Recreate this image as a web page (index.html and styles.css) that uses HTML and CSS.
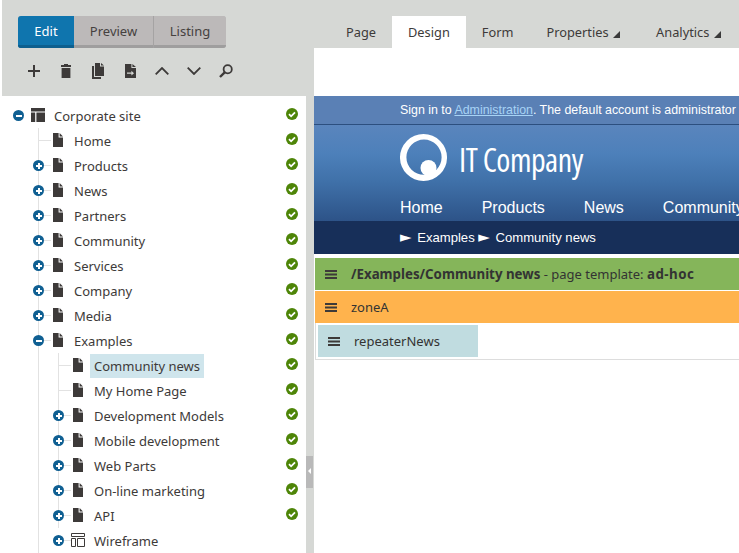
FILE: index.html
```html
<!DOCTYPE html>
<html lang="en">
<head>
<meta charset="utf-8">
<title>Pages</title>
<link rel="stylesheet" href="styles.css">
</head>
<body>
<svg class="defs" width="0" height="0" aria-hidden="true">
  <symbol id="page" viewBox="0 0 10 14"><path d="M0 0h5.6v4.4H10V14H0z"/><path d="M6.6 0L10 3.4H6.6z"/></symbol>
  <symbol id="layout" viewBox="0 0 14 14"><path d="M0 0h14v3.4H0zM0 4.6h4.2V14H0zM5.4 4.6H14V14H5.4z"/></symbol>
  <symbol id="wire" viewBox="0 0 14 14"><path fill="none" stroke="currentColor" d="M.5.5h13v3H.5zM.5 5.5h4v8h-4zM6.5 5.5h7v8h-7z"/></symbol>
  <symbol id="check" viewBox="0 0 12 12"><circle cx="6" cy="6" r="6" fill="#4e8508"/><path d="M3 6.2l2.1 2.1L9 4.3" fill="none" stroke="#fff" stroke-width="1.8"/></symbol>
  <symbol id="menu" viewBox="0 0 12 9"><path d="M0 0h12v2H0zM0 3.5h12v2H0zM0 7h12v2H0z"/></symbol>
</svg>
<div class="app">
  <aside class="sidebar">
    <div class="modes">
      <div class="mode-group">
        <span class="mode mode-active">Edit</span>
        <span class="mode mode-preview">Preview</span>
        <span class="mode mode-listing">Listing</span>
      </div>
    </div>
    <div class="toolbar">
      <span class="tool"><svg width="12" height="12" viewBox="0 0 12 12"><path d="M5 0h2v5h5v2H7v5H5V7H0V5h5z"/></svg></span>
      <span class="tool"><svg width="10" height="14" viewBox="0 0 10 14"><path d="M3 0h4v1h3v2H0V1h3zM.6 4h8.8v10H.6z"/></svg></span>
      <span class="tool"><svg width="12" height="16" viewBox="0 0 12 16"><path d="M3 0h5v3.4h4V13H3zM9 0l3 2.4H9zM0 3h2v11h7v2H0z"/></svg></span>
      <span class="tool"><svg width="11" height="14" viewBox="0 0 11 14"><path fill-rule="evenodd" d="M0 0h6.4v4H11v10H0zM7.4 0L11 3H7.4zM2 8.6v1.2h4.4V11.6L9 9.2 6.4 6.8v1.8z"/></svg></span>
      <span class="tool"><svg class="line" width="14" height="8" viewBox="0 0 14 8"><path d="M.7 7.3L7 1l6.3 6.3"/></svg></span>
      <span class="tool"><svg class="line" width="14" height="8" viewBox="0 0 14 8"><path d="M.7.7L7 7 13.3.7"/></svg></span>
      <span class="tool"><svg class="line" width="14" height="14" viewBox="0 0 14 14"><circle cx="8.7" cy="5.3" r="4.1"/><path class="thick" d="M5.7 8.3L1 13"/></svg></span>
    </div>
    <nav class="tree">
      <ul class="tree-root">
        <li>
          <div class="row row-root">
            <span class="slot"><span class="toggle toggle-open"></span></span>
            <svg class="ico ico-wide"><use href="#layout"/></svg>
            <span class="label">Corporate site</span>
            <svg class="status"><use href="#check"/></svg>
          </div>
          <ul class="branch">
            <li><div class="row"><span class="slot"></span><svg class="ico"><use href="#page"/></svg><span class="label">Home</span><svg class="status"><use href="#check"/></svg></div></li>
            <li><div class="row"><span class="slot"><span class="toggle"></span></span><svg class="ico"><use href="#page"/></svg><span class="label">Products</span><svg class="status"><use href="#check"/></svg></div></li>
            <li><div class="row"><span class="slot"><span class="toggle"></span></span><svg class="ico"><use href="#page"/></svg><span class="label">News</span><svg class="status"><use href="#check"/></svg></div></li>
            <li><div class="row"><span class="slot"><span class="toggle"></span></span><svg class="ico"><use href="#page"/></svg><span class="label">Partners</span><svg class="status"><use href="#check"/></svg></div></li>
            <li><div class="row"><span class="slot"><span class="toggle"></span></span><svg class="ico"><use href="#page"/></svg><span class="label">Community</span><svg class="status"><use href="#check"/></svg></div></li>
            <li><div class="row"><span class="slot"><span class="toggle"></span></span><svg class="ico"><use href="#page"/></svg><span class="label">Services</span><svg class="status"><use href="#check"/></svg></div></li>
            <li><div class="row"><span class="slot"><span class="toggle"></span></span><svg class="ico"><use href="#page"/></svg><span class="label">Company</span><svg class="status"><use href="#check"/></svg></div></li>
            <li><div class="row"><span class="slot"><span class="toggle"></span></span><svg class="ico"><use href="#page"/></svg><span class="label">Media</span><svg class="status"><use href="#check"/></svg></div></li>
            <li>
              <div class="row"><span class="slot"><span class="toggle toggle-open"></span></span><svg class="ico"><use href="#page"/></svg><span class="label">Examples</span><svg class="status"><use href="#check"/></svg></div>
              <ul class="branch branch-sub">
                <li><div class="row"><span class="slot"></span><svg class="ico"><use href="#page"/></svg><span class="label label-selected">Community news</span><svg class="status"><use href="#check"/></svg></div></li>
                <li><div class="row"><span class="slot"></span><svg class="ico"><use href="#page"/></svg><span class="label">My Home Page</span><svg class="status"><use href="#check"/></svg></div></li>
                <li><div class="row"><span class="slot"><span class="toggle"></span></span><svg class="ico"><use href="#page"/></svg><span class="label">Development Models</span><svg class="status"><use href="#check"/></svg></div></li>
                <li><div class="row"><span class="slot"><span class="toggle"></span></span><svg class="ico"><use href="#page"/></svg><span class="label">Mobile development</span><svg class="status"><use href="#check"/></svg></div></li>
                <li><div class="row"><span class="slot"><span class="toggle"></span></span><svg class="ico"><use href="#page"/></svg><span class="label">Web Parts</span><svg class="status"><use href="#check"/></svg></div></li>
                <li><div class="row"><span class="slot"><span class="toggle"></span></span><svg class="ico"><use href="#page"/></svg><span class="label">On-line marketing</span><svg class="status"><use href="#check"/></svg></div></li>
                <li><div class="row"><span class="slot"><span class="toggle"></span></span><svg class="ico"><use href="#page"/></svg><span class="label">API</span><svg class="status"><use href="#check"/></svg></div></li>
                <li><div class="row"><span class="slot"><span class="toggle"></span></span><svg class="ico ico-wire"><use href="#wire"/></svg><span class="label">Wireframe</span></div></li>
              </ul>
            </li>
          </ul>
        </li>
      </ul>
    </nav>
  </aside>
  <div class="splitter"><span class="splitter-handle"></span></div>
  <main class="main">
    <div class="tabs">
      <span class="tab">Page</span>
      <span class="tab tab-active">Design</span>
      <span class="tab tab-form">Form</span>
      <span class="tab tab-menu">Properties</span>
      <span class="tab tab-menu">Analytics</span>
    </div>
    <div class="tabs-gap"></div>
    <section class="site">
      <div class="signin"><span>Sign in to <a href="#">Administration</a>. The default account is administrator</span></div>
      <div class="masthead">
        <div class="logo">
          <svg class="logo-mark" width="47" height="47" viewBox="0 0 47 47"><path fill-rule="evenodd" d="M23.5 0a23.5 23.5 0 1 0 0 47a23.5 23.5 0 1 0 0-47zM24 5.6a17.6 17.6 0 1 1 0 35.2a17.6 17.6 0 1 1 0-35.2z"/><circle cx="28.5" cy="34" r="8"/></svg>
          <span class="logo-text">IT Company</span>
        </div>
        <div class="site-nav">
          <span>Home</span><span>Products</span><span>News</span><span>Community</span>
        </div>
      </div>
      <div class="crumbs"><span class="crumb-arrow">►</span> Examples <span class="crumb-arrow">►</span> Community news</div>
      <div class="design">
        <div class="bar bar-page"><svg class="handle"><use href="#menu"/></svg><span><b>/Examples/Community news</b> - page template: <b class="tpl">ad-hoc</b></span></div>
        <div class="zone">
          <div class="bar bar-zone"><svg class="handle"><use href="#menu"/></svg><span>zoneA</span></div>
          <div class="zone-body">
            <div class="bar bar-part"><svg class="handle"><use href="#menu"/></svg><span>repeaterNews</span></div>
          </div>
        </div>
      </div>
    </section>
  </main>
</div>
</body>
</html>
```
FILE: styles.css
```css
html, body { margin: 0; height: 100%; overflow: hidden; background: #fff; }
body { font-family: "Noto Sans", sans-serif; font-size: 13px; color: #3d3a39; }
ul { list-style: none; margin: 0; padding: 0; }
.defs { position: absolute; }
.app { display: flex; height: 553px; width: 739px; overflow: hidden; }

.sidebar { width: 304px; margin-left: 2px; flex: none; display: flex; flex-direction: column; background: #d6d8d5; }
.modes { padding: 16px 0 0 16px; height: 32px; }
.mode-group { display: inline-flex; height: 32px; box-sizing: border-box; border-radius: 3px; overflow: hidden; background: #bcb9b9; }
.mode { display: flex; align-items: center; justify-content: center; height: 32px; padding-bottom: 2px; background: #bcb9b9; color: #45413f; font-size: 13px; box-sizing: border-box; box-shadow: inset 0 -3px 0 #9f9e9e; }
.mode-active { width: 56px; background: #0f75ae; color: #fff; box-shadow: inset 0 -3px 0 #0d5f8e; }
.mode-preview { width: 80px; border-right: 1px solid #a5a3a3; }
.mode-listing { width: 72px; }

.toolbar { height: 46px; padding: 0 0 2px 16px; display: flex; align-items: center; }
.tool { width: 32px; display: flex; justify-content: center; align-items: center; }
.tool svg { fill: #3d3a39; }
.tool svg.line { fill: none; stroke: #3d3a39; stroke-width: 1.8; }
.tool svg .thick { stroke-width: 2.4; }

.tree { flex: 1; min-height: 0; background: #fff; overflow: hidden; padding: 7px 8px 0 0; }
.row { display: flex; align-items: center; height: 25px; }
.row-root { padding-left: 17px; }
.branch { margin-left: 36px; border-left: 1px solid #e2e2e2; }
.branch-sub { margin-left: 19px; border-left: 0; }
.branch-sub > li { border-left: 1px solid #e2e2e2; }
.branch-sub > li:last-child { border-left-color: transparent; }
.slot { position: relative; width: 12px; height: 1px; margin-right: 2px; background: #e2e2e2; flex: none; }
.row-root .slot { background: none; margin-right: 0; }
.toggle { position: absolute; left: -6px; top: -5px; width: 11px; height: 11px; border-radius: 50%; background: #0f5f92; }
.toggle::before { content: ""; position: absolute; left: 2.5px; top: 4.5px; width: 6px; height: 2px; background: #fff; }
.toggle::after { content: ""; position: absolute; left: 4.5px; top: 2.5px; width: 2px; height: 6px; background: #fff; }
.toggle-open::after { display: none; }
.ico { width: 10px; height: 14px; flex: none; fill: #3d3a39; color: #3d3a39; margin-top: -1px; }
.ico-wide { width: 14px; }
.ico-wire { width: 14px; margin: -1px -2px 0; fill: none; }
.label { margin-left: 7px; padding: 0 4px; line-height: 24px; white-space: nowrap; color: #3d3a39; }
.row-root .label { margin-left: 5px; }
.label-selected { background: #cfe5ec; }
.status { width: 12px; height: 12px; margin-left: auto; margin-top: -3px; flex: none; }

.splitter { position: relative; width: 8px; flex: none; background: #d6d8d5; }
.splitter-handle { position: absolute; left: 0; top: 456px; width: 7px; height: 32px; background: #b9b9b9; }
.splitter-handle::after { content: ""; position: absolute; left: 2px; top: 12px; border: 3px solid transparent; border-left-width: 0; border-right: 3px solid #fff; }

.main { flex: 1; min-width: 0; overflow: hidden; }
.tabs { height: 32px; padding: 16px 0 0 16px; background: #d6d8d5; display: flex; }
.tab { padding: 0 16px; line-height: 32px; color: #3d3a39; font-size: 12.8px; white-space: nowrap; }
.tab-active { background: #fff; }
.tab-form { padding-right: 17px; }
.tab-menu { position: relative; padding-right: 31.5px; }
.tab-menu::after { content: ""; position: absolute; right: 20px; top: 15px; border-style: solid; border-width: 0 0 7px 7px; border-color: transparent transparent #3a3a3a transparent; }
.tabs-gap { height: 48px; }

.site { width: 425px; overflow: hidden; }
.signin { height: 28px; padding-left: 86px; background: #5a80b5; border-bottom: 1px solid #2c4f7f; box-shadow: 0 1px 0 #6d92c2; font: 12.4px/28px "Liberation Sans", Arial, sans-serif; color: #fff; white-space: nowrap; }
.signin a { color: #a7d3f5; }
.masthead { height: 96px; box-sizing: border-box; padding: 9px 0 0 86px; background: linear-gradient(#5a85bd 0%, #4d80ba 30%, #3f70a8 60%, #2d5388 100%); color: #fff; display: flex; flex-direction: column; }
.logo { display: flex; align-items: center; height: 47px; }
.logo-mark { fill: #fff; flex: none; }
.logo-text { font-family: "Open Sans", sans-serif; font-size: 32px; line-height: 47px; font-stretch: 75%; letter-spacing: -0.5px; margin: 4px 0 0 12px; }
.site-nav { display: flex; gap: 39px; margin-top: 17px; font: 16px/20px "Liberation Sans", Arial, sans-serif; white-space: nowrap; }
.crumbs { height: 33px; padding-left: 86px; background: #172f59; color: #fff; font: 13.1px/33px "Liberation Sans", Arial, sans-serif; }
.crumb-arrow { font-family: "DejaVu Sans", sans-serif; font-size: 15px; line-height: 1; margin-right: 2px; }

.design { padding: 4px 0 0 1px; color: #333; }
.bar { display: flex; align-items: center; height: 32px; padding-left: 10px; white-space: nowrap; }
.bar b { font-weight: 700; font-size: 13.3px; }
.bar b.tpl { letter-spacing: 0.5px; }
.handle { width: 12px; height: 9px; flex: none; fill: #3d3a39; margin-right: 14px; }
.bar-page { background: #85b55a; margin-bottom: 1px; }
.bar-zone { background: #ffb34d; }
.zone-body { padding: 2px 0 2px 2px; border-left: 1px solid #ddd; border-bottom: 1px solid #ddd; }
.bar-part { width: 160px; box-sizing: border-box; background: #c0dce0; }
```
